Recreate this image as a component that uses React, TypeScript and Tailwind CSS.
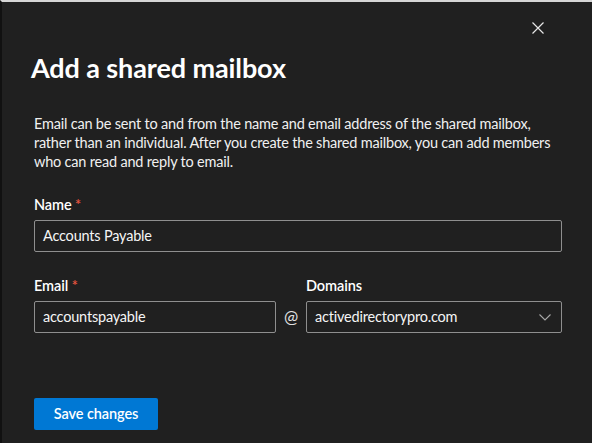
import React from "react";

export default function App() {
  const font = { fontFamily: 'Lato, "Noto Sans", sans-serif' };
  return (
    <div
      className="relative w-[592px] h-[443px] overflow-hidden bg-[#202020] border-t-2 border-t-[#d6d6d6] border-l-2 border-l-[#111111] text-[#f5f5f5] pl-[32px] pr-[30px]"
      style={font}
    >
      <button className="absolute right-[47px] top-[19px] w-[14px] h-[14px] flex items-center justify-center text-[#e6e6e6]">
        <svg width="12" height="12" viewBox="0 0 12 12" fill="none" stroke="currentColor" strokeWidth="1.2">
          <path d="M0.5 0.5 L11.5 11.5 M11.5 0.5 L0.5 11.5" />
        </svg>
      </button>

      <h1 className="mt-[50px] -ml-[3px] text-[27px] leading-[32px] font-bold tracking-[-0.1px] text-white whitespace-nowrap">
        Add a shared mailbox
      </h1>

      <p className="mt-[30px] text-[14.5px] leading-[19px] tracking-[-0.2px] text-[#f0f0f0] whitespace-nowrap">
        Email can be sent to and from the name and email address of the shared mailbox,
        <br />
        rather than an individual. After you create the shared mailbox, you can add members
        <br />
        who can read and reply to email.
      </p>

      <div className="mt-[24px]">
        <label className="block text-[14.5px] leading-[20px] font-semibold tracking-[-0.1px] text-white">
          Name <span className="text-[#e8553f]">*</span>
        </label>
        <div className="mt-[5px] h-[32px] rounded-[2px] border border-[#8f8f8f] flex items-center pl-[8px] text-[14.5px] tracking-[-0.2px]">
          Accounts Payable
        </div>
      </div>

      <div className="mt-[24px] flex items-end">
        <div className="w-[242px]">
          <label className="block text-[14.5px] leading-[20px] font-semibold tracking-[-0.1px] text-white">
            Email <span className="text-[#e8553f]">*</span>
          </label>
          <div className="mt-[5px] h-[32px] rounded-[2px] border border-[#8f8f8f] flex items-center pl-[8px] text-[14.5px] tracking-[-0.2px]">
            accountspayable
          </div>
        </div>
        <div className="w-[30px] h-[32px] flex items-center justify-center text-[17px] text-[#e0e0e0]">
          @
        </div>
        <div className="flex-1">
          <label className="block text-[14.5px] leading-[20px] font-semibold tracking-[-0.1px] text-white">
            Domains
          </label>
          <div className="mt-[5px] h-[32px] rounded-[2px] border border-[#8f8f8f] flex items-center justify-between pl-[8px] pr-[10px] text-[14.5px] tracking-[-0.2px]">
            <span>activedirectorypro.com</span>
            <svg width="12" height="7" viewBox="0 0 12 7" fill="none" stroke="#a8a8a8" strokeWidth="1.1">
              <path d="M0.5 0.5 L6 6 L11.5 0.5" />
            </svg>
          </div>
        </div>
      </div>

      <button className="mt-[65px] w-[124px] h-[32px] bg-[#0078d4] rounded-[2px] text-white text-[14.5px] font-semibold tracking-[-0.1px] flex items-center justify-center">
        Save changes
      </button>
    </div>
  );
}
